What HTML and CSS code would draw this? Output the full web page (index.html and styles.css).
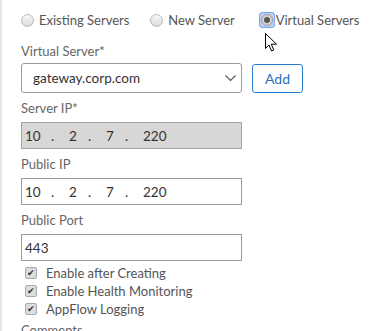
FILE: index.html
```html
<!DOCTYPE html>
<html lang="en">
<head>
    <meta charset="UTF-8">
    <title>Virtual Servers</title>
    <link rel="stylesheet" href="styles.css">
</head>
<body>
    <div class="panel">
        <div class="radios">
            <label class="radio"><span class="dot"></span>Existing Servers</label>
            <label class="radio"><span class="dot"></span>New Server</label>
            <label class="radio selected"><span class="ring"><span class="dot"><span class="inner"></span></span></span>Virtual Servers
                <svg class="cursor" width="13" height="19" viewBox="0 0 13 19">
                    <path d="M0.5 0.5 L0.5 15.5 L4 12 L6.5 18 L8.8 17 L6.3 11.2 L11.5 11.2 Z" fill="#fff" stroke="#000" stroke-width="1"/>
                </svg>
            </label>
        </div>

        <div class="field first">
            <div class="label">Virtual Server*</div>
            <div class="row">
                <div class="select">
                    <span>gateway.corp.com</span>
                    <svg width="11" height="7" viewBox="0 0 11 7"><path d="M0.5 0.5 L5.5 5.5 L10.5 0.5" fill="none" stroke="#555" stroke-width="1.1"/></svg>
                </div>
                <button class="add">Add</button>
            </div>
        </div>

        <div class="field">
            <div class="label">Server IP*</div>
            <div class="ip disabled">
                <span class="oct">10</span><span class="sep">.</span><span class="oct">2</span><span class="sep">.</span><span class="oct">7</span><span class="sep">.</span><span class="oct">220</span>
            </div>
        </div>

        <div class="field">
            <div class="label">Public IP</div>
            <div class="ip">
                <span class="oct">10</span><span class="sep">.</span><span class="oct">2</span><span class="sep">.</span><span class="oct">7</span><span class="sep">.</span><span class="oct">220</span>
            </div>
        </div>

        <div class="field">
            <div class="label">Public Port</div>
            <div class="text-input">443</div>
        </div>

        <div class="checks">
            <label class="check"><span class="box">&#10004;</span>Enable after Creating</label>
            <label class="check"><span class="box">&#10004;</span>Enable Health Monitoring</label>
            <label class="check"><span class="box">&#10004;</span>AppFlow Logging</label>
        </div>

        <div class="comments">Comments</div>
    </div>
</body>
</html>
```

FILE: styles.css
```css
* {
    margin: 0;
    padding: 0;
    box-sizing: border-box;
}
body {
    font-family: Lato, "Open Sans", sans-serif;
    font-size: 13px;
    color: #333;
    background-color: #fff;
    overflow: hidden;
    height: 331px;
}
.panel {
    border-left: 2px solid #e6e6e6;
    height: 331px;
    padding: 11px 0 0 19px;
}
.radios {
    display: flex;
    align-items: center;
    height: 18px;
}
.radio {
    display: flex;
    align-items: center;
    white-space: nowrap;
    color: #555;
    position: relative;
    width: 130px;
}
.radio:nth-child(2) {
    width: 110px;
}
.dot {
    width: 13px;
    height: 13px;
    border-radius: 50%;
    border: 1px solid #b8b8b8;
    background: linear-gradient(#f6f6f6, #dcdcdc);
    margin-right: 5px;
    display: flex;
    align-items: center;
    justify-content: center;
    flex: none;
}
.ring {
    display: flex;
    padding: 1px;
    margin: -1px 1px 0 -1px;
    border: 1px solid #7ea6ea;
    border-radius: 3px;
    background: #b9cff5;
}
.ring .dot {
    width: 12px;
    height: 12px;
    margin-right: 0;
    background: #d4d4d4;
    border-color: #9c9c9c;
}
.inner {
    width: 6px;
    height: 6px;
    border-radius: 50%;
    background: #555;
}
.cursor {
    position: absolute;
    left: 5px;
    top: 21px;
}
.label {
    color: #666;
    line-height: 18px;
    margin-top: 6px;
    margin-bottom: 5px;
}
.first .label {
    margin-top: 13px;
    margin-bottom: 3px;
}
.row {
    display: flex;
    align-items: center;
    gap: 10px;
}
.select {
    width: 221px;
    height: 30px;
    border: 1px solid #9a9a9a;
    border-radius: 3px;
    display: flex;
    align-items: center;
    justify-content: space-between;
    padding: 0 5px 0 11px;
    font-size: 13.5px;
    color: #333;
}
.add {
    width: 51px;
    height: 29px;
    border: 1px solid #2a7fd1;
    border-radius: 3px;
    background: #fff;
    color: #2a6fb8;
    font-family: inherit;
    font-size: 14px;
}
.ip, .text-input {
    width: 221px;
    height: 27px;
    border: 1px solid #9a9a9a;
    display: flex;
    align-items: center;
    padding-left: 3px;
    font-size: 13.5px;
}
.ip.disabled {
    background: #d7d7d7;
    border-color: #a4a4a4;
}
.oct {
    width: 19px;
}
.oct:first-child {
    width: 26px;
}
.sep {
    width: 18px;
}
.checks {
    margin-top: 3px;
    padding-left: 4px;
}
.check {
    display: flex;
    align-items: center;
    height: 18px;
    color: #555;
}
.box {
    width: 12px;
    height: 12px;
    border: 1px solid #a8a8a8;
    border-radius: 2px;
    background: #dcdcdc;
    font-size: 9px;
    line-height: 10px;
    color: #333;
    text-align: center;
    margin-right: 9px;
}
.comments {
    color: #666;
    line-height: 18px;
    margin-top: 3px;
}
```
